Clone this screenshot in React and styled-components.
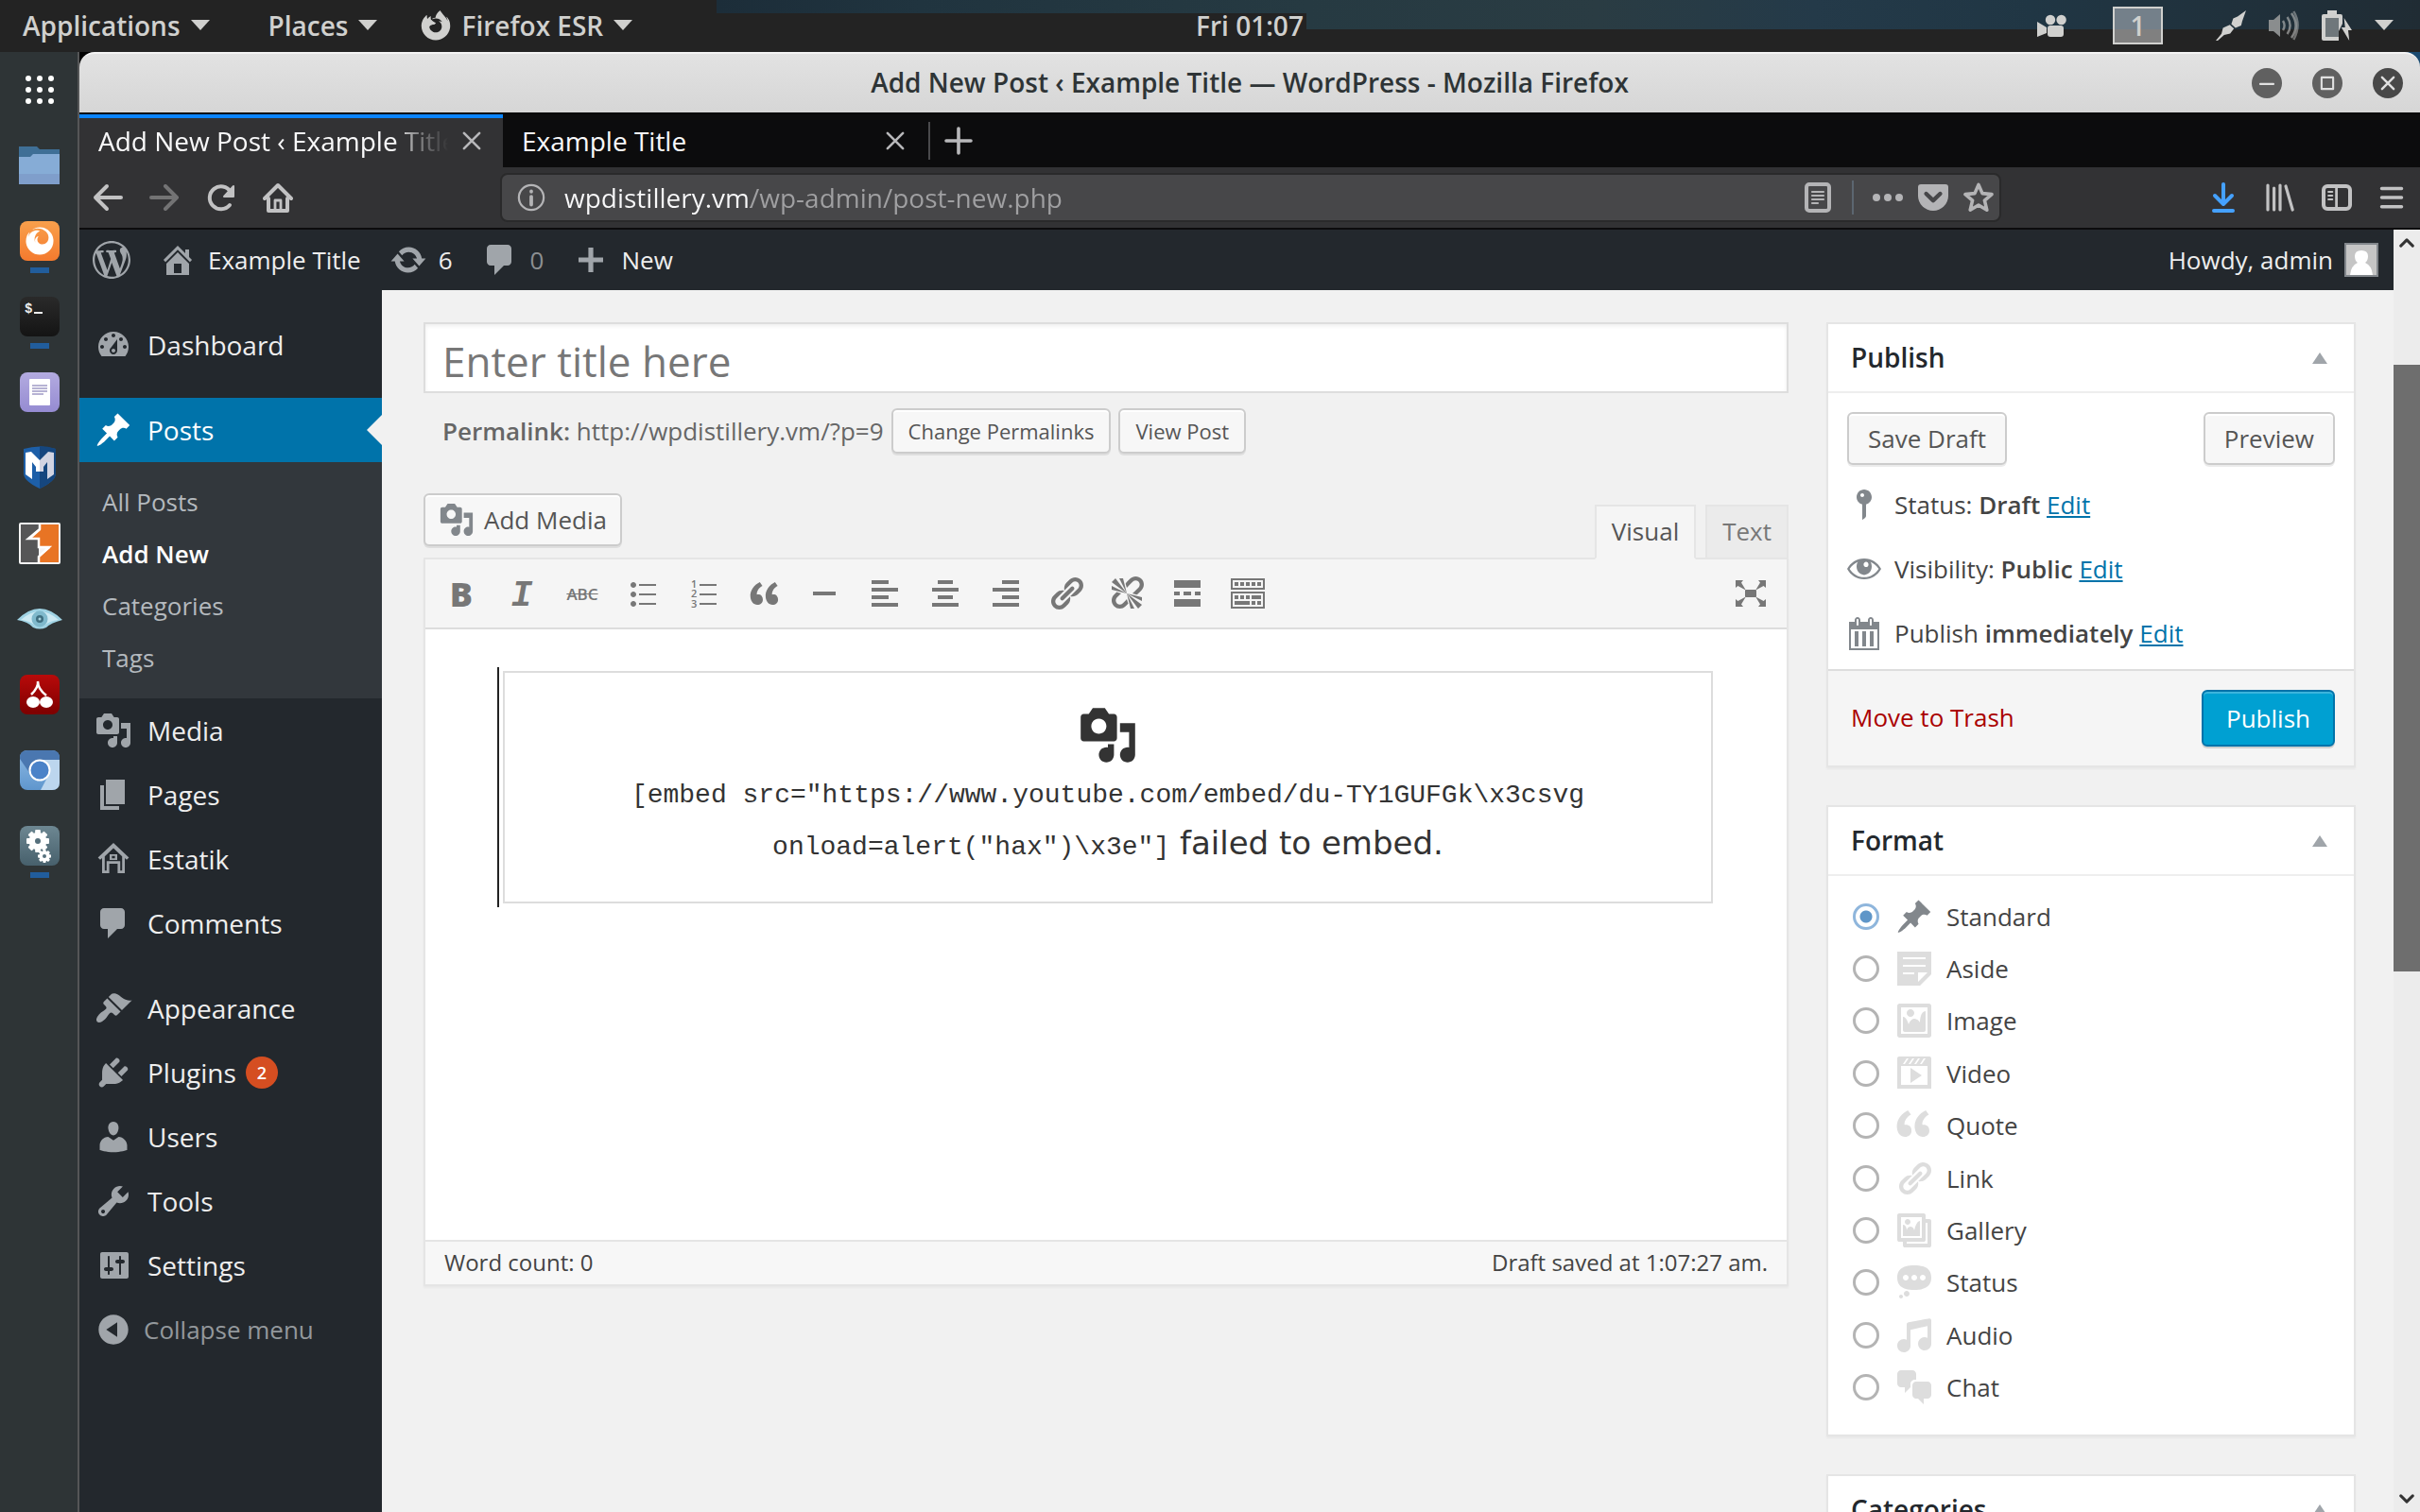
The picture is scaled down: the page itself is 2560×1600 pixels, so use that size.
import React, { useState } from "react";
import styled, { createGlobalStyle } from "styled-components";
import { FaFirefox, FaFirefoxBrowser } from "react-icons/fa";

const Global = createGlobalStyle`
  *, *::before, *::after { box-sizing: border-box; }
  body { margin: 0; background: #000; font-family: "Open Sans", "Noto Sans", sans-serif; }
  ul { list-style: none; margin: 0; padding: 0; }
  button, input { font-family: inherit; margin: 0; }
  button { cursor: pointer; }
  svg { display: block; flex: none; }
`;

/* ---------- icon shapes (20 x 20 grid) ---------- */
const shapes = {
  post: "M10.44 3.02l1.82-1.82 6.36 6.35-1.83 1.82c-1.05-.68-2.48-.57-3.41.36l-.75.75c-.92.93-1.04 2.35-.35 3.41l-1.83 1.82-2.41-2.41-2.8 2.79c-.42.42-3.38 2.71-3.8 2.29s1.86-3.39 2.28-3.81l2.79-2.79L4.1 9.36l1.83-1.82c1.05.69 2.48.57 3.4-.36l.75-.75c.93-.92 1.05-2.35.36-3.41z",
  dashboard: "M3.76 16h12.48c1.1-1.37 1.76-3.11 1.76-5 0-4.42-3.58-8-8-8s-8 3.58-8 8c0 1.89.66 3.63 1.76 5zM10 4c.55 0 1 .45 1 1s-.45 1-1 1-1-.45-1-1 .45-1 1-1zM6 6c.55 0 1 .45 1 1s-.45 1-1 1-1-.45-1-1 .45-1 1-1zm8 0c.55 0 1 .45 1 1s-.45 1-1 1-1-.45-1-1 .45-1 1-1zm-5.37 5.55L12 7v6c0 1.1-.9 2-2 2s-2-.9-2-2c0-.57.24-1.08.63-1.45zM4 10c.55 0 1 .45 1 1s-.45 1-1 1-1-.45-1-1 .45-1 1-1zm12 0c.55 0 1 .45 1 1s-.45 1-1 1-1-.45-1-1 .45-1 1-1zm-5 3c0-.55-.45-1-1-1s-1 .45-1 1 .45 1 1 1 1-.45 1-1z",
  media: "M13 11V4c0-.55-.45-1-1-1h-1.67L9 1H5L3.67 3H2c-.55 0-1 .45-1 1v7c0 .55.45 1 1 1h10c.55 0 1-.45 1-1zM7 4.5c1.38 0 2.5 1.12 2.5 2.5S8.38 9.5 7 9.5 4.5 8.38 4.5 7 5.62 4.5 7 4.5zM14 6h5v10.5c0 1.38-1.12 2.5-2.5 2.5S14 17.88 14 16.5s1.12-2.5 2.5-2.5c.17 0 .34.02.5.05V9h-3V6zm-4 8.05V13h2v3.5c0 1.38-1.12 2.5-2.5 2.5S7 17.88 7 16.5 8.12 14 9.5 14c.17 0 .34.02.5.05z",
  page: "M6 15V2h10v13H6zm-1 1h8v2H3V5h2v11z",
  estatik: "M10 1.5L1.8 9.2l1.2 1.2 1-.9V17.500h3.800v-5h4.400v5H16V9.500l1 .9 1.200-1.200zM10 4.300l4.600 4.300v7.500h-1v-5H6.400v5h-1V8.600zM8 7.500h4v3H8zM9.200 8.400v1.200h1.600V8.400z",
  comments: "M5 2h9c1.100 0 2 .9 2 2v7c0 1.100-.9 2-2 2h-2l-5 5v-5H5c-1.100 0-2-.9-2-2V4c0-1.100.9-2 2-2z",
  appearance: "M14.48 11.060L7.410 3.990l1.500-1.500c.5-.56 2.300-.47 3.510.32 1.210.8 1.430 1.280 2.910 2.100 1.180.64 2.450 1.260 4.450.85zm-.71.71L6.700 4.700 4.930 6.470c-.39.39-.39 1.020 0 1.410l1.060 1.060c.39.39.39 1.030 0 1.420-.6.6-1.430 1.110-2.210 1.690-.35.26-.7.53-1.010.84C1.430 14.230.4 16.080 1.400 17.070c.99 1 2.840-.03 4.180-1.360.31-.31.58-.66.85-1.020.57-.78 1.080-1.610 1.690-2.210.39-.39 1.020-.39 1.410 0l1.060 1.060c.39.39 1.020.39 1.410 0z",
  plugins: "M13.110 4.360L9.870 7.600 8 5.730l3.240-3.240c.35-.34 1.050-.2 1.560.32.52.51.66 1.210.31 1.550zm-8 1.770l.91-1.120 9.010 9.010-1.190.84c-.71.71-2.630 1.160-3.820 1.160H6.140L4.900 17.260c-.59.59-1.540.59-2.120 0-.59-.58-.59-1.530 0-2.120l1.240-1.240v-3.880c0-1.130.4-3.190 1.090-3.890zm7.260 3.970l3.240-3.240c.34-.35 1.040-.21 1.550.31.52.51.66 1.210.31 1.550l-3.240 3.250z",
  users: "M10 9.250c-2.270 0-2.730-3.440-2.730-3.440C7 4.020 7.820 2 9.970 2c2.160 0 2.980 2.020 2.710 3.810 0 0-.41 3.440-2.680 3.440zm0 2.570L12.720 10c2.390 0 4.520 2.330 4.520 4.530v2.490s-3.650 1.130-7.240 1.130c-3.650 0-7.240-1.130-7.240-1.130v-2.490c0-2.250 1.940-4.480 4.470-4.480z",
  tools: "M16.680 9.770c-1.340 1.340-3.300 1.670-4.950.99l-5.410 6.520c-.99.99-2.590.99-3.580 0s-.99-2.590 0-3.570l6.520-5.420c-.68-1.650-.35-3.610.99-4.950 1.280-1.280 3.120-1.620 4.720-1.060l-2.890 2.890 2.820 2.820 2.860-2.870c.53 1.580.18 3.390-1.080 4.650zM3.810 16.210c.4.39 1.040.39 1.430 0 .4-.4.4-1.040 0-1.430-.39-.4-1.030-.4-1.430 0-.39.39-.39 1.030 0 1.430z",
  settings: "M18 16V4c0-.55-.45-1-1-1H4c-.55 0-1 .45-1 1v12c0 .55.45 1 1 1h13c.55 0 1-.45 1-1zM8 11h1c.55 0 1 .45 1 1s-.45 1-1 1H8v1.500c0 .28-.22.5-.5.5s-.5-.22-.5-.5V13H6c-.55 0-1-.45-1-1s.45-1 1-1h1V5.500c0-.28.22-.5.5-.5s.5.22.5.5V11zm6-2h-1v5.500c0 .28.22.5.5.5s.5-.22.500-.5V9h1c.55 0 1-.45 1-1s-.45-1-1-1h-1V5.500c0-.28-.22-.5-.5-.5s-.5.22-.5.5V7h-1c-.55 0-1 .45-1 1s.45 1 1 1h1z",
  collapse: "M10 2.160c4.330 0 7.840 3.510 7.840 7.840s-3.510 7.840-7.840 7.840S2.160 14.330 2.160 10 5.710 2.160 10 2.160zm2 11.720V6.120L6.180 9.970z",
  home: "M16 8.500l1.530 1.530-1.060 1.060L10 4.600l-6.470 6.490-1.060-1.060L10 2.500l4 4v-2h2v4zm-6-2.460l6 5.990V18H4v-5.970zM12 17v-5H8v5h4z",
  update: "M10.200 3.280c3.530 0 6.430 2.610 6.920 6h2.080l-3.500 4-3.500-4h2.320c-.45-1.970-2.210-3.450-4.320-3.450-1.450 0-2.730.71-3.540 1.780L4.950 5.660C6.230 4.200 8.110 3.280 10.200 3.280zm-.4 13.440c-3.520 0-6.430-2.610-6.920-6H.8l3.500-4c1.170 1.330 2.330 2.670 3.500 4H5.480c.45 1.970 2.210 3.450 4.320 3.450 1.450 0 2.730-.71 3.540-1.780l1.710 1.950c-1.280 1.460-3.150 2.380-5.250 2.380z",
  plus: "M8.700 3.500h2.600v5.200h5.200v2.600h-5.200v5.200H8.700v-5.200H3.500V8.700h5.200z",
  wordpress: "M20 10c0-5.510-4.490-10-10-10C4.480 0 0 4.490 0 10c0 5.520 4.480 10 10 10 5.510 0 10-4.480 10-10zM7.780 15.370L4.370 6.220c.55-.02 1.170-.08 1.170-.08.5-.06.44-1.130-.06-1.110 0 0-1.450.11-2.370.11-.18 0-.37 0-.58-.01C4.120 2.690 6.870 1.110 10 1.110c2.330 0 4.450.87 6.050 2.340-.68-.11-1.650.39-1.650 1.580 0 .74.45 1.360.9 2.100.35.61.55 1.360.55 2.460 0 1.490-1.400 5-1.400 5l-3.030-8.370c.54-.02.82-.17.82-.17.5-.05.44-1.250-.06-1.220 0 0-1.440.12-2.380.12-.87 0-2.330-.12-2.330-.12-.5-.03-.56 1.200-.06 1.220l.92.08 1.260 3.410zM17.410 10c.24-.64.74-1.870.43-4.250.7 1.290 1.050 2.710 1.050 4.250 0 3.290-1.730 6.240-4.400 7.780.97-2.590 1.940-5.200 2.920-7.780zM6.100 18.090C3.120 16.650 1.110 13.530 1.110 10c0-1.300.23-2.480.72-3.590C3.250 10.300 4.670 14.200 6.100 18.090zm4.030-6.630l2.580 6.980c-.86.29-1.760.45-2.710.45-.79 0-1.570-.11-2.290-.33.81-2.380 1.620-4.740 2.420-7.100z",
  ul: "M5 7C4.170 7 3.500 6.330 3.500 5.500 3.500 4.680 4.170 4 5 4s1.500.68 1.500 1.500C6.500 6.330 5.820 7 5 7zM8 5h9v1H8V5zm-3 7c-.83 0-1.500-.67-1.500-1.500C3.500 9.680 4.170 9 5 9s1.500.68 1.500 1.500c0 .83-.68 1.500-1.500 1.500zM8 10h9v1H8v-1zm-3 7c-.83 0-1.500-.67-1.500-1.500 0-.82.67-1.500 1.500-1.500s1.500.68 1.500 1.500c0 .83-.68 1.500-1.500 1.500zM8 15h9v1H8v-1z",
  quoteTool: "M9.490 13.220c0-.74-.2-1.380-.61-1.900-.62-.78-1.830-.88-2.530-.72-.29-1.650 1.110-3.750 2.920-4.650L7.880 4c-2.730 1.300-5.420 4.280-4.960 8.050C3.210 14.430 4.590 16 6.540 16c.85 0 1.560-.25 2.120-.75s.83-1.180.83-2.030zm8.050 0c0-.74-.2-1.380-.61-1.900-.63-.78-1.830-.88-2.530-.72-.29-1.650 1.110-3.750 2.920-4.650L15.930 4c-2.730 1.300-5.410 4.280-4.950 8.050.29 2.380 1.660 3.950 3.610 3.950.85 0 1.560-.25 2.120-.75s.83-1.180.83-2.030z",
  rule: "M4 9h12v2H4z",
  left: "M3 3h9v2H3zM3 7h14v2H3zM3 11h9v2H3zM3 15h14v2H3z",
  center: "M6 3h8v2H6zM3 7h14v2H3zM6 11h8v2H6zM3 15h14v2H3z",
  right: "M8 3h9v2H8zM3 7h14v2H3zM8 11h9v2H8zM3 15h14v2H3z",
  link: "M17.740 2.760c1.680 1.690 1.680 4.410 0 6.100l-1.530 1.520c-1.120 1.120-2.700 1.470-4.140 1.090l2.620-2.610.76-.77.76-.76c.84-.84.84-2.200 0-3.040-.84-.85-2.200-.85-3.040 0l-.77.76-3.380 3.380c-.37-1.440-.02-3.020 1.100-4.140l1.520-1.530c1.690-1.680 4.420-1.680 6.100 0zM8.590 13.430l5.340-5.340c.42-.42.42-1.100 0-1.520-.44-.43-1.130-.39-1.530 0l-5.330 5.340c-.42.42-.42 1.100 0 1.520.44.43 1.130.39 1.520 0zm-.76 2.290l4.140-4.150c.38 1.440.03 3.020-1.090 4.140l-1.520 1.530c-1.690 1.680-4.410 1.680-6.100 0-1.680-1.680-1.680-4.420 0-6.100l1.530-1.520c1.120-1.120 2.700-1.470 4.140-1.100l-4.140 4.150c-.85.84-.85 2.200 0 3.050.84.84 2.200.84 3.040 0z",
  unlink: "M17.740 2.260c1.680 1.690 1.680 4.410 0 6.100l-1.530 1.520c-.32.33-.69.58-1.080.77L13 10l1.690-1.640.76-.77.76-.76c.84-.84.84-2.200 0-3.040-.84-.85-2.200-.85-3.040 0l-.77.76-.76.76L10 7l-.65-2.140c.19-.38.44-.75.77-1.070l1.520-1.530c1.690-1.680 4.420-1.680 6.100 0zM2 4l8 6-6-8zm4-2l4 8-2-8H6zM2 6l8 4-8-2V6zm7.360 7.690L10 13l.74 2.350-1.380 1.390c-1.690 1.680-4.410 1.680-6.100 0-1.680-1.680-1.680-4.420 0-6.100l1.390-1.380L7 10l-.69.64-1.520 1.530c-.85.84-.85 2.200 0 3.040.84.85 2.200.85 3.040 0zM18 16l-8-6 6 8zm-4 2l-4-8 2 8h2zm4-4l-8-4 8 2v2z",
  more: "M17 7V3H3v4h14zM6 11V9H3v2h3zm6 0V9H8v2h4zm5 0V9h-3v2h3zm0 6v-4H3v4h14z",
  keyboard: "M19 2v6H1V2h18zm-1 5V3H2v4h16zM5 4v2H3V4h2zm3 0v2H6V4h2zm3 0v2H9V4h2zm3 0v2h-2V4h2zm3 0v2h-2V4h2zm2 5v9H1V9h18zm-1 8v-7H2v7h16zM5 11v2H3v-2h2zm3 0v2H6v-2h2zm3 0v2H9v-2h2zm6 0v2h-5v-2h5zm-6 3v2H3v-2h8zm3 0v2h-2v-2h2zm3 0v2h-2v-2h2z",
  fullscreen: "M7 8h6v4H7zM2 3h4L5 4.200 7.400 8.200 3.200 6 2 7zM18 3h-4l1 1.200-2.400 4L16.800 6 18 7zM2 17h4l-1-1.200 2.400-4L3.200 14 2 13zM18 17h-4l1-1.200-2.400-4 4.200 2.200 1.200-1z",
  aside: "M1 1h18v12l-6 6H1V1zm3 3v1h12V4H4zm0 4v1h12V8H4zm6 5v-1H4v1h6zm2 4l5-5h-5v5z",
  image: "M2.250 1h15.500c.69 0 1.250.56 1.250 1.250v15.500c0 .69-.56 1.250-1.250 1.250H2.250C1.560 19 1 18.440 1 17.750V2.250C1 1.560 1.560 1 2.250 1zM17 17V3H3v14h14zM10 6c0-1.100-.9-2-2-2s-2 .9-2 2 .9 2 2 2 2-.9 2-2zm3 5s0-6 3-6v10c0 .55-.45 1-1 1H5c-.55 0-1-.45-1-1V8c2 0 3 4 3 4s1-3 3-3 3 2 3 2z",
  video: "M2 1h16c.55 0 1 .45 1 1v16l-18-.02V2c0-.55.45-1 1-1zm4 1L4 5h1l2-3H6zm4 0H9L7 5h1zm3 0h-1l-2 3h1zm3 0h-1l-2 3h1zm1 14V6H3v10h14zM8 7l6 4-6 4V7z",
  quote: "M8.540 12.740c0-.87-.24-1.610-.72-2.220-.73-.92-2.140-1.030-2.960-.85-.34-1.930 1.300-4.390 3.420-5.450L6.650 1.940C3.450 3.460.31 6.960.85 11.370 1.190 14.160 2.800 16 5.080 16c1 0 1.830-.29 2.480-.88.66-.59.98-1.380.98-2.380zm9.430 0c0-.87-.24-1.610-.72-2.220-.73-.92-2.140-1.030-2.960-.85-.34-1.930 1.300-4.390 3.420-5.450l-1.630-2.280c-3.200 1.520-6.340 5.020-5.800 9.430.34 2.790 1.950 4.630 4.230 4.630 1 0 1.830-.29 2.480-.88.66-.59.98-1.380.98-2.380z",
  gallery: "M16 4h1.960c.57 0 1.040.47 1.040 1.040v12.920c0 .57-.47 1.040-1.040 1.040H5.040C4.470 19 4 18.530 4 17.960V16H2.040C1.470 16 1 15.530 1 14.960V2.040C1 1.470 1.470 1 2.040 1h12.920c.57 0 1.040.47 1.040 1.040V4zM3 14h11V3H3v11zm5-8.500C8 4.670 7.330 4 6.500 4S5 4.670 5 5.500 5.670 7 6.500 7 8 6.330 8 5.500zm2 4.500s1-5 3-5v8H4V7c2 0 2 3 2 3s.33-2 2-2 2 2 2 2zm7 7V6h-1v8.960c0 .57-.47 1.040-1.040 1.040H6v1h11z",
  status: "M10 1c7 0 9 2.910 9 6.500S17 14 10 14s-9-2.910-9-6.500S3 1 10 1zM5.500 9C6.330 9 7 8.330 7 7.500S6.330 6 5.500 6 4 6.670 4 7.500 4.670 9 5.500 9zM10 9c.83 0 1.500-.67 1.500-1.500S10.830 6 10 6s-1.500.67-1.500 1.500S9.170 9 10 9zm4.500 0c.83 0 1.500-.67 1.500-1.500S15.330 6 14.500 6 13 6.670 13 7.500 13.670 9 14.500 9zM6 14.500c.83 0 1.500.67 1.500 1.500s-.67 1.500-1.500 1.500-1.500-.67-1.500-1.500.67-1.500 1.500-1.500zm-3 2c.55 0 1 .45 1 1s-.45 1-1 1-1-.45-1-1 .45-1 1-1z",
  audio: "M6.990 3.080l11.020-2c.55-.08.99.45.99 1V14.500c0 1.940-1.570 3.500-3.500 3.500S12 16.440 12 14.500c0-1.930 1.570-3.500 3.500-3.500.54 0 1.040.14 1.500.35V5.080l-9 2V16c-.24 1.700-1.740 3-3.500 3C2.570 19 1 17.440 1 15.500 1 13.570 2.570 12 4.500 12c.54 0 1.040.14 1.500.35V4.080c0-.55.44-.91.99-1z",
  chat: "M11 6h-.82C9.070 6 8 7.200 8 8.160V10l-3 3v-3H3c-1.100 0-2-.9-2-2V3c0-1.100.9-2 2-2h6c1.100 0 2 .9 2 2v3zm0 1h6c1.100 0 2 .9 2 2v5c0 1.100-.9 2-2 2h-2v3l-3-3h-1c-1.100 0-2-.9-2-2V9c0-1.100.9-2 2-2z",
  pin: "M14 6c0 1.860-1.280 3.410-3 3.860V16c0 1-2 2-2 2V9.860c-1.720-.45-3-2-3-3.860 0-2.210 1.790-4 4-4s4 1.790 4 4zM8 5c0 .55.45 1 1 1s1-.45 1-1-.45-1-1-1-1 .45-1 1z",
  eye: "M10 4.500c-4 0-7.300 2.300-9 5.500 1.700 3.200 5 5.500 9 5.500s7.300-2.300 9-5.500c-1.700-3.200-5-5.500-9-5.500zM10 14.400c-3.300 0-6.100-1.800-7.700-4.400C3.300 8.300 4.900 7 6.700 6.200 6.200 6.900 6 7.800 6 8.800c0 2.400 1.800 4.400 4 4.400s4-2 4-4.400c0-1-.2-1.900-.7-2.600 1.800.8 3.400 2.100 4.400 3.800-1.600 2.600-4.400 4.400-7.700 4.400zM11 6.300c.7 0 1.300.6 1.300 1.400S11.700 9 11 9s-1.300-.6-1.300-1.300.6-1.400 1.300-1.400z",
  calendar: "M15 4h3v15H2V4h3V3c0-.41.15-.76.44-1.060.29-.29.65-.44 1.060-.44s.77.15 1.060.44c.29.3.44.65.44 1.060v1h4V3c0-.41.15-.76.44-1.060.29-.29.65-.44 1.060-.44s.77.15 1.060.44c.29.3.44.65.44 1.060v1zM6 3v2.500c0 .14.05.26.15.36.09.09.21.14.35.14s.26-.05.35-.14c.1-.1.15-.22.15-.36V3c0-.14-.05-.26-.15-.35-.09-.1-.21-.15-.35-.15s-.26.05-.35.15c-.1.09-.15.21-.15.35zm7 0v2.500c0 .14.05.26.14.36.1.09.22.14.36.14s.26-.05.36-.14c.09-.1.14-.22.14-.36V3c0-.14-.05-.26-.14-.35-.1-.1-.22-.15-.36-.15s-.26.05-.36.15c-.09.09-.14.21-.14.35zm4 15V8H3v10h14zM7 9v8H5V9h2zm4 0v8H9V9h2zm4 0v8h-2V9h2z",
};

const Glyph = ({ name, size = 40 }) => (
  <svg width={size} height={size} viewBox="0 0 20 20" fill="currentColor" aria-hidden="true">
    <path d={shapes[name]} fillRule="evenodd" />
  </svg>
);

const Line = ({ children, size = 32, width = 2 }) => (
  <svg width={size} height={size} viewBox="0 0 16 16" fill="none" stroke="currentColor" strokeWidth={width} strokeLinecap="round" strokeLinejoin="round" aria-hidden="true">
    {children}
  </svg>
);

/* ---------- desktop ---------- */
const Desktop = styled.div`
  display: flex;
  flex-direction: column;
  height: 100vh;
  overflow: hidden;
`;

const TopBar = styled.header`
  flex: none;
  display: grid;
  grid-template-columns: 84px 1fr auto 1fr;
  align-items: center;
  height: 55px;
  padding-bottom: 2px;
  color: #d0d0ce;
  font-size: 28px;
  font-weight: 600;
  line-height: 40px;
  background-color: #232323;
  background-image:
    linear-gradient(90deg, transparent 29.6%, #1c2d39 29.6%, #20343f 38%, #263a42 54%, transparent 54%),
    linear-gradient(90deg, transparent 54%, #263a42 54%, #2a3c43 66%, #243a49 75%, #203644 84%, #202c34 100%);
  background-size: 100% 14px, 100% 31px;
  background-repeat: no-repeat;
`;

const TopMenus = styled.nav`
  grid-column: 1 / 3;
  display: flex;
  align-items: center;
  padding-left: 24px;
`;

const BareButton = styled.button`
  display: inline-flex;
  align-items: center;
  justify-content: center;
  padding: 0;
  border: 0;
  background: none;
  color: inherit;
  font-size: inherit;
  font-weight: inherit;
  line-height: inherit;
`;

const TopMenu = styled(BareButton)`
  gap: 11px;
  margin-right: ${(p) => p.$gap || 0}px;
`;

const Caret = styled.span`
  width: 0;
  height: 0;
  border: 10px solid transparent;
  border-top: 11px solid currentColor;
  border-bottom: 0;
`;

const Tray = styled.div`
  display: flex;
  align-items: center;
  justify-content: flex-end;
  gap: 24px;
  padding-right: 28px;
`;

const TrayGroup = styled(BareButton)`
  gap: ${(p) => p.$gap || 0}px;
`;

const Workspace = styled(BareButton)`
  width: 53px;
  height: 40px;
  margin: 0 32px 0 24px;
  border: 2px solid #d0d0ce;
  background: linear-gradient(#74808a 60%, #808080 60%);
`;

const Main = styled.div`
  flex: 1;
  display: flex;
  min-height: 0;
`;

const Dock = styled.nav`
  flex: none;
  width: 84px;
  border-right: 2px solid #555657;
  background: #2e3436;
`;

const DockItem = styled.button`
  position: relative;
  display: flex;
  align-items: center;
  justify-content: center;
  width: 100%;
  height: 80px;
  padding: 0 0 0 2px;
  border: 0;
  background: none;
  &::after {
    content: "";
    display: ${(p) => (p.$running ? "block" : "none")};
    position: absolute;
    left: 32px;
    bottom: 6px;
    width: 20px;
    height: 6px;
    background: #215d9c;
  }
`;

const Window = styled.div`
  flex: 1;
  min-width: 0;
  display: flex;
  flex-direction: column;
  background: linear-gradient(90deg, #000 50%, #1a4a70 50%);
`;

const TitleBar = styled.div`
  flex: none;
  display: grid;
  grid-template-columns: 1fr auto 1fr;
  align-items: center;
  height: 64px;
  border-top: 2px solid #f4f4f4;
  border-radius: 16px 16px 0 0;
  background: linear-gradient(#e2e2e2, #d6d6d6);
`;

const WindowTitle = styled.h1`
  grid-column: 2;
  margin: 0;
  padding-bottom: 2px;
  color: #2e3436;
  font-size: 28px;
  font-weight: 600;
  line-height: 40px;
`;

const WindowButtons = styled.div`
  display: flex;
  justify-content: flex-end;
  gap: 32px;
  padding-right: 18px;
`;

const RoundButton = styled(BareButton)`
  width: 32px;
  height: 32px;
  border-radius: 50%;
  background: ${(p) => (p.$strong ? "#484848" : "#606060")};
  color: #e0e0e0;
`;

const TabStrip = styled.div`
  flex: none;
  display: flex;
  height: 58px;
  border: solid #060606;
  border-width: 2px 0 0;
  background: #0c0c0d;
`;

const Tab = styled.div`
  display: flex;
  align-items: center;
  justify-content: space-between;
  width: 448px;
  padding: 0 20px 4px;
  border-top: 4px solid ${(p) => (p.$active ? "#0a84ff" : "transparent")};
  background: ${(p) => (p.$active ? "#323234" : "transparent")};
  color: #f9f9fa;
  font-size: 28px;
  line-height: 40px;
`;

const TabTitle = styled.span`
  flex: 1;
  overflow: hidden;
  white-space: nowrap;
  ${(p) => p.$fade && "mask-image: linear-gradient(90deg, #000 82%, rgba(0,0,0,.45) 88%, transparent 97%);"}
`;

const TabClose = styled(BareButton)`
  width: 26px;
  color: #b8b8ba;
`;

const NewTab = styled(BareButton)`
  align-self: center;
  width: 62px;
  height: 40px;
  margin-left: 2px;
  border-left: 2px solid #4a4a4c;
  color: #b8b8ba;
`;

const NavBar = styled.div`
  flex: none;
  display: flex;
  align-items: center;
  justify-content: space-between;
  height: 66px;
  padding: 0 16px 0 14px;
  border-bottom: 2px solid #0c0c0d;
  background: #323234;
  color: #c2c2c3;
`;

const NavGroup = styled.div`
  display: flex;
  align-items: center;
  gap: ${(p) => p.$gap}px;
`;

const NavButton = styled(BareButton)`
  color: ${(p) => p.$color || "inherit"};
  opacity: ${(p) => (p.disabled ? 0.45 : 1)};
`;

const UrlBar = styled.form`
  display: flex;
  align-items: center;
  flex: 0 1 1588px;
  height: 52px;
  padding: 0 6px 0 16px;
  border: 2px solid #2a2a2b;
  border-radius: 8px;
  background: #474749;
  color: #b4b4b6;
`;

const UrlInput = styled.input`
  flex: 1;
  min-width: 0;
  padding: 0;
  margin-left: 20px;
  border: 0;
  outline: 0;
  color: #f9f9fa;
  font-size: 28px;
  line-height: 40px;
  background: linear-gradient(90deg, #f9f9fa 197px, #a0a0a2 197px);
  background-clip: text;
  -webkit-text-fill-color: transparent;
`;

const UrlActions = styled.div`
  display: flex;
  align-items: center;
  gap: 16px;
  height: 36px;
  margin-left: 20px;
  padding-left: 20px;
  border-left: 2px solid #5c6670;
`;

/* ---------- web page ---------- */
const Viewport = styled.div`
  flex: 1;
  display: flex;
  min-height: 0;
`;

const Page = styled.div`
  flex: 1;
  min-width: 0;
  display: flex;
  flex-direction: column;
  background: #f1f1f1;
  color: #444;
  font-size: 26px;
`;

const AdminBar = styled.div`
  flex: none;
  display: flex;
  align-items: center;
  height: 64px;
  padding: 0 16px 0 14px;
  background: #23282d;
  color: #eee;
  font-size: 26px;
  line-height: 64px;
`;

const BarLink = styled.a`
  display: flex;
  align-items: center;
  gap: 12px;
  margin-right: ${(p) => (p.$last ? 0 : 30)}px;
  margin-left: ${(p) => (p.$push ? "auto" : 0)};
  color: ${(p) => (p.$dim ? "#8c8f92" : "#eee")};
  text-decoration: none;
  svg { color: #a0a5aa; }
`;

const Avatar = styled.svg`
  width: 36px;
  height: 36px;
  border: 2px solid #82878c;
  background: #c5c5c5;
`;

const PageBody = styled.div`
  flex: 1;
  display: flex;
  min-height: 0;
`;

const SideMenu = styled.nav`
  flex: none;
  width: 320px;
  padding-top: 24px;
  background: #23282d;
`;

const MenuItem = styled.li`
  margin-top: ${(p) => (p.$spaced ? 22 : 0)}px;
`;

const MenuLink = styled.a`
  position: relative;
  display: flex;
  align-items: center;
  height: 68px;
  padding-left: 16px;
  gap: 16px;
  background: ${(p) => (p.$current ? "#0073aa" : "transparent")};
  color: ${(p) => (p.$current ? "#fff" : "#eee")};
  font-size: 28px;
  line-height: 36px;
  text-decoration: none;
  svg { color: ${(p) => (p.$current ? "#fff" : "#a0a5aa")}; }
  &::after {
    content: "";
    display: ${(p) => (p.$current ? "block" : "none")};
    position: absolute;
    right: 0;
    top: 18px;
    border: 16px solid transparent;
    border-right-color: #f1f1f1;
    border-left: 0;
  }
`;

const SubMenu = styled.ul`
  padding: 15px 0;
  background: #32373c;
`;

const SubLink = styled.a`
  display: block;
  padding-left: 24px;
  color: ${(p) => (p.$current ? "#fff" : "#b4b9be")};
  font-size: 26px;
  font-weight: ${(p) => (p.$current ? 600 : 400)};
  line-height: 55px;
  text-decoration: none;
`;

const Badge = styled.span`
  width: 34px;
  margin-left: -6px;
  border-radius: 17px;
  background: #d54e21;
  color: #fff;
  font-size: 18px;
  font-weight: 600;
  line-height: 34px;
  text-align: center;
`;

const CollapseButton = styled(BareButton)`
  height: 68px;
  padding-left: 16px;
  gap: 12px;
  color: #a0a5aa;
  font-size: 26px;
  span { color: #93989c; }
`;

const Content = styled.main`
  flex: 1;
  min-width: 0;
  display: grid;
  grid-template-columns: 1fr 560px;
  align-items: start;
  gap: 40px;
  padding: 34px 40px 0 44px;
`;

const Column = styled.div`
  min-width: 0;
`;

const SidePanels = styled(Column)`
  display: flex;
  flex-direction: column;
  gap: 40px;
`;

const TitleInput = styled.input`
  display: block;
  width: 100%;
  height: 75px;
  padding: 6px 18px 0;
  border: 2px solid #ddd;
  outline: 0;
  background: #fff;
  box-shadow: inset 0 2px 4px rgba(0, 0, 0, 0.07);
  color: #32373c;
  font-size: 44px;
  &::placeholder { color: #777; opacity: 1; }
`;

const PermalinkRow = styled.div`
  display: flex;
  align-items: center;
  gap: 8px;
  margin: 16px 0 42px;
  padding-left: 20px;
  color: #666;
  font-size: 26px;
  line-height: 48px;
  strong { font-weight: 600; }
`;

const Button = styled.button`
  display: inline-flex;
  align-items: center;
  justify-content: center;
  gap: 10px;
  height: ${(p) => (p.$small ? 48 : 56)}px;
  padding: 0 ${(p) => (p.$small ? 16 : 20)}px;
  border: 2px solid #ccc;
  border-radius: 6px;
  background: #f7f7f7;
  box-shadow: inset 0 2px 0 #fff, 0 2px 0 rgba(0, 0, 0, 0.08);
  color: #555;
  font-size: ${(p) => (p.$small ? 22 : 26)}px;
`;

const MediaButton = styled(Button)`
  margin-bottom: 12px;
  padding: 0 14px;
  svg { color: #82878c; }
`;

const PrimaryButton = styled(Button)`
  height: 60px;
  padding: 0 24px;
  border-color: #0073aa;
  background: #00a0d2;
  box-shadow: inset 0 2px 0 rgba(120, 200, 230, 0.5), 0 2px 0 rgba(0, 0, 0, 0.15);
  color: #fff;
`;

const EditorTop = styled.div`
  display: flex;
  align-items: flex-end;
  justify-content: space-between;
`;

const EditorTabs = styled.div`
  display: flex;
  gap: 10px;
  margin-bottom: -2px;
`;

const EditorTab = styled.button`
  position: relative;
  height: 58px;
  padding: 0 16px 2px;
  border: 2px solid #e5e5e5;
  border-bottom-color: ${(p) => (p.$active ? "#f5f5f5" : "#e5e5e5")};
  background: ${(p) => (p.$active ? "#f5f5f5" : "#ebebeb")};
  color: ${(p) => (p.$active ? "#555" : "#777")};
  font-size: 26px;
`;

const Editor = styled.section`
  border: 2px solid #e5e5e5;
  background: #fff;
  box-shadow: 0 2px 2px rgba(0, 0, 0, 0.04);
`;

const Toolbar = styled.div`
  display: flex;
  align-items: center;
  height: 74px;
  padding: 0 6px;
  border-bottom: 2px solid #ddd;
  background: #f5f5f5;
`;

const ToolButton = styled(BareButton)`
  width: 64px;
  height: 60px;
  margin-left: ${(p) => (p.$push ? "auto" : 0)};
  color: #777;
`;

const BoldMark = styled.b`
  font-size: 36px;
  font-weight: 800;
`;

const ItalicMark = styled.i`
  padding-top: 4px;
  font-family: "Liberation Mono", monospace;
  font-size: 38px;
  font-weight: 700;
`;

const StrikeMark = styled.s`
  font-size: 17px;
  font-weight: 600;
`;

const Canvas = styled.div`
  min-height: 646px;
  padding: 40px 78px 40px 76px;
`;

const Selection = styled.div`
  padding: 4px 0 4px 4px;
  border-left: 2px solid #222;
`;

const EmbedBox = styled.div`
  padding: 34px 120px;
  border: 2px solid #ddd;
  color: #333;
  font-family: "DejaVu Sans", sans-serif;
  font-size: 34px;
  line-height: 55px;
  text-align: center;
  svg { margin: 0 auto; }
  p { margin: 0; }
  code { font-family: "Liberation Mono", monospace; font-size: 28px; line-height: 28px; }
`;

const StatusBar = styled.footer`
  display: flex;
  justify-content: space-between;
  padding: 0 20px 1px;
  border-top: 2px solid #e5e5e5;
  background: #f7f7f7;
  font-size: 24px;
  line-height: 44px;
`;

const Panel = styled.section`
  border: 2px solid #e5e5e5;
  background: #fff;
  box-shadow: 0 2px 2px rgba(0, 0, 0, 0.04);
`;

const PanelHead = styled.header`
  display: flex;
  align-items: center;
  justify-content: space-between;
  height: 73px;
  padding: 0 28px 0 24px;
  border-bottom: 2px solid #eee;
  h2 {
    margin: 0;
    padding-bottom: 2px;
    color: #23282d;
    font-size: 28px;
    font-weight: 600;
    line-height: 40px;
  }
`;

const Toggle = styled(BareButton)`
  &::before {
    content: "";
    border: 8px solid transparent;
    border-bottom: 12px solid #a0a5aa;
    border-top: 0;
  }
`;

const Split = styled.div`
  display: flex;
  align-items: center;
  justify-content: space-between;
  padding: 20px 20px 8px;
`;

const Facts = styled.ul`
  padding: 0 20px 4px 18px;
`;

const Fact = styled.li`
  display: flex;
  align-items: center;
  gap: 12px;
  height: 68px;
  svg { color: #82878c; }
  b { font-weight: 600; }
  a { color: #0073aa; }
`;

const Actions = styled(Split)`
  padding: 20px 20px 20px 24px;
  border-top: 2px solid #ddd;
  background: #f5f5f5;
  a { padding-bottom: 2px; color: #a00; text-decoration: none; }
`;

const FormatList = styled.div`
  display: grid;
  grid-auto-rows: 1fr;
  min-height: 591px;
  padding: 15px 20px 22px 26px;
`;

const FormatRow = styled.label`
  display: flex;
  align-items: center;
  color: #444;
  svg { margin: 0 14px 0 17px; color: ${(p) => (p.$on ? "#82878c" : "#ddd")}; }
`;

const Radio = styled.input`
  appearance: none;
  width: 28px;
  height: 28px;
  border: 3px solid ${(p) => (p.checked ? "#8fb6dc" : "#b4b4b4")};
  border-radius: 50%;
  background: ${(p) => (p.checked ? "radial-gradient(circle, #5f96c8 0 6px, #fff 7px)" : "#fff")};
`;

const ScrollBar = styled.div`
  flex: none;
  display: flex;
  flex-direction: column;
  width: 28px;
  background: #ececec;
  color: #333;
`;

const ScrollButton = styled(BareButton)`
  height: 28px;
`;

const Spacer = styled.div`
  flex: ${(p) => p.$grow} 0 0;
`;

const Thumb = styled(Spacer)`
  background: #6e6e6e;
`;

/* ---------- drawings ---------- */
const Tile = ({ id, from, to, children }) => (
  <svg width="44" height="44" viewBox="0 0 44 44" aria-hidden="true">
    <defs>
      <linearGradient id={id} x1="0" y1="0" x2="0" y2="1">
        <stop offset="0" stopColor={from} />
        <stop offset="1" stopColor={to} />
      </linearGradient>
    </defs>
    <rect x="1" y="1" width="42" height="42" rx="8" fill={`url(#${id})`} />
    {children}
  </svg>
);

const gear = (cx, cy, r, teeth, hole) => (
  <g>
    {Array.from({ length: teeth }, (_, i) => (
      <rect key={i} x={cx - r * 0.24} y={cy - r} width={r * 0.48} height={r} rx="1" fill="#fff" transform={`rotate(${(i * 360) / teeth} ${cx} ${cy})`} />
    ))}
    <circle cx={cx} cy={cy} r={r * 0.78} fill="#fff" />
    <circle cx={cx} cy={cy} r={hole} fill="#56707c" />
  </g>
);

const FoldersIcon = () => (
  <svg width="46" height="42" viewBox="0 0 46 42" aria-hidden="true">
    <path d="M1 41V1h19l3 3h21v37z" fill="#3f6f96" />
    <path d="M1 41V12h12l3-3h28v32z" fill="#86acd6" />
    <path d="M1 41V30h43v11z" fill="#7c98c6" opacity=".7" />
  </svg>
);

const MetasploitIcon = () => (
  <svg width="36" height="46" viewBox="0 0 36 46" aria-hidden="true">
    <path d="M1 3q17-5 34 0v26q0 8-17 16Q1 37 1 29z" fill="#1d5fa8" />
    <path d="M18 45Q35 37 35 29V3q-8-3-17-3z" fill="#15467e" />
    <path d="M3 7l6-1 9 9v12h-4v-5l-4-5v18l-7-5z" fill="#fff" />
    <path d="M33 7l-6-1-9 9v12h4v-5l4-5v18l7-5z" fill="#d2d4e2" />
  </svg>
);

const BurpIcon = () => (
  <svg width="46" height="46" viewBox="0 0 46 46" aria-hidden="true">
    <rect x="1" y="1" width="44" height="44" rx="2" fill="#f4f4f4" />
    <path d="M3 3h19v5L10 18h12v25H3z" fill="#565657" />
    <path d="M24 3h19v40H23v-6l11-9H22V18H14L24 9z" fill="#e87424" />
    <path d="M23 3v5L11 18h11v9h11L22 37v7" fill="none" stroke="#fff" strokeWidth="2.500" />
  </svg>
);

const EyeIcon = () => (
  <svg width="48" height="24" viewBox="0 0 48 24" aria-hidden="true">
    <path d="M0 13Q12 1 24 1t24 12Q36 16 31 21q-7 3-14 0Q12 15 0 13z" fill="#9fd3e4" />
    <path d="M4 13Q14 4 24 4t20 9q-10 1-15 6-5 2-10 0-5-5-15-6z" fill="#cdeaf3" />
    <circle cx="24" cy="12" r="8.500" fill="#7fb9cc" />
    <circle cx="24" cy="12" r="4" fill="#3f6f80" />
    <circle cx="24" cy="12" r="1.500" fill="#a9d4e0" />
  </svg>
);

const CherryIcon = () => (
  <Tile id="cherry" from="#b80a0a" to="#7d0000">
    <path d="M20 8q1 6-7 14M20 8q0 8 9 15" fill="none" stroke="#fff" strokeWidth="2.500" />
    <ellipse cx="15" cy="30" rx="7" ry="6" fill="#fff" />
    <ellipse cx="29" cy="30" rx="7" ry="6" fill="#fff" />
  </Tile>
);

const ChromiumIcon = () => (
  <Tile id="chromium" from="#8db9e4" to="#5f96cd">
    <path d="M1 9q0-8 8-8h26q8 0 8 8v2H22L12 26 1 10z" fill="#4a77b0" />
    <path d="M22 11h21v24q0 8-8 8H23l9-17z" fill="#bcd6ee" />
    <circle cx="22" cy="22" r="10.500" fill="#4a82c8" stroke="#fff" strokeWidth="2" />
  </Tile>
);

const NotesIcon = () => (
  <Tile id="notes" from="#b3abe0" to="#958bd2">
    <rect x="11" y="8" width="22" height="28" rx="1" fill="#fff" />
    <path d="M14 15h16M14 18h16M14 21h16M14 24h12" stroke="#6f66a8" strokeWidth="1" />
  </Tile>
);

const TerminalIcon = () => (
  <Tile id="term" from="#2a2a2a" to="#141414">
    <text x="6" y="18" fill="#eee" fontFamily="Liberation Mono, monospace" fontSize="14" fontWeight="700">$</text>
    <path d="M16 18h9" stroke="#eee" strokeWidth="2" />
  </Tile>
);

const AppsIcon = () => (
  <svg width="30" height="30" viewBox="0 0 30 30" fill="#fff" aria-hidden="true">
    {[3, 15, 27].map((x) => [3, 15, 27].map((y) => <circle key={`${x}-${y}`} cx={x} cy={y} r="3" />))}
  </svg>
);

const FirefoxTile = () => (
  <Tile id="fox" from="#f9a04c" to="#f47a2e">
    <g transform="translate(7 7)" color="#fff"><FaFirefox size={30} /></g>
  </Tile>
);

const SettingsTile = () => (
  <Tile id="gears" from="#6d8792" to="#47606c">
    {gear(20, 17, 12, 8, 3)}
    {gear(27, 33, 7, 8, 2)}
  </Tile>
);

const dock = [
  ["Show applications", AppsIcon, false],
  ["Files", FoldersIcon, false],
  ["Firefox", FirefoxTile, true],
  ["Terminal", TerminalIcon, true],
  ["Notes", NotesIcon, false],
  ["Metasploit", MetasploitIcon, false],
  ["Burp Suite", BurpIcon, false],
  ["Zenmap", EyeIcon, false],
  ["CherryTree", CherryIcon, false],
  ["Chromium", ChromiumIcon, false],
  ["Tweaks", SettingsTile, true],
];

const menu = [
  { label: "Dashboard", icon: "dashboard" },
  { label: "Posts", icon: "post", current: true, spaced: true, children: ["All Posts", "Add New", "Categories", "Tags"] },
  { label: "Media", icon: "media" },
  { label: "Pages", icon: "page" },
  { label: "Estatik", icon: "estatik" },
  { label: "Comments", icon: "comments" },
  { label: "Appearance", icon: "appearance", spaced: true },
  { label: "Plugins", icon: "plugins", count: 2 },
  { label: "Users", icon: "users" },
  { label: "Tools", icon: "tools" },
  { label: "Settings", icon: "settings" },
];

const formats = [
  ["Standard", "post"],
  ["Aside", "aside"],
  ["Image", "image"],
  ["Video", "video"],
  ["Quote", "quote"],
  ["Link", "link"],
  ["Gallery", "gallery"],
  ["Status", "status"],
  ["Audio", "audio"],
  ["Chat", "chat"],
];

const NumberedList = () => (
  <svg width="40" height="40" viewBox="0 0 40 40" fill="currentColor" aria-hidden="true">
    <path d="M16 10h18v2H16zM16 20h18v2H16zM16 30h18v2H16z" />
    <g fontFamily="Open Sans, sans-serif" fontSize="11" fontWeight="600">
      <text x="7" y="14">1</text>
      <text x="7" y="24">2</text>
      <text x="7" y="35">3</text>
    </g>
  </svg>
);

const tools = [
  ["Bold", <BoldMark>B</BoldMark>],
  ["Italic", <ItalicMark>I</ItalicMark>],
  ["Strikethrough", <StrikeMark>ABC</StrikeMark>],
  ["Bulleted list", <Glyph name="ul" />],
  ["Numbered list", <NumberedList />],
  ["Blockquote", <Glyph name="quoteTool" />],
  ["Horizontal line", <Glyph name="rule" />],
  ["Align left", <Glyph name="left" />],
  ["Align center", <Glyph name="center" />],
  ["Align right", <Glyph name="right" />],
  ["Insert link", <Glyph name="link" />],
  ["Remove link", <Glyph name="unlink" />],
  ["Read more", <Glyph name="more" />],
  ["Toolbar toggle", <Glyph name="keyboard" />],
];

const facts = [
  ["pin", "Status:", "Draft"],
  ["eye", "Visibility:", "Public"],
  ["calendar", "Publish", "immediately"],
];

function SystemBar() {
  return (
    <TopBar>
      <TopMenus>
        <TopMenu $gap={62}>Applications<Caret /></TopMenu>
        <TopMenu $gap={46}>Places<Caret /></TopMenu>
        <TopMenu><FaFirefoxBrowser size={32} />Firefox ESR<Caret /></TopMenu>
      </TopMenus>
      <BareButton>Fri 01:07</BareButton>
      <Tray>
        <TrayGroup aria-label="Screen recorder">
          <svg width="32" height="32" viewBox="0 0 16 16" fill="currentColor">
            <path d="M0 6l5 3v3l-5 2z" />
            <circle cx="7" cy="5" r="2.600" />
            <circle cx="12.800" cy="5" r="2.600" />
            <rect x="5.500" y="8" width="8.500" height="6" rx="1.500" />
          </svg>
        </TrayGroup>
        <Workspace>1</Workspace>
        <TrayGroup $gap={24} aria-label="System menu">
          <svg width="32" height="32" viewBox="0 0 16 16" fill="currentColor">
            <path d="M16 0l-4.500 3.200-2.300 1-1 3 2.200 2 3-1.200.6-2.400zM7.400 7.600l-3.600 1.600-.8 3.200L0 16l1 0 3.400-3 3.200-.8 2-2.600z" />
          </svg>
          <svg width="32" height="32" viewBox="0 0 16 16" fill="none" stroke="currentColor" strokeWidth="1.200">
            <path d="M0 5h2.500L6 2v12l-3.500-3H0z" fill="#8a8d8e" stroke="none" />
            <path d="M7.500 5.500q1.600 2.500 0 5M9.800 3.500q3 4.500 0 9M12 1.500q4.600 6.500 0 13" opacity=".55" />
            <path d="M13.200.5q4.200 7 0 15" opacity=".45" />
          </svg>
          <svg width="32" height="32" viewBox="0 0 16 16" fill="currentColor">
            <path d="M3 0h5v2h2q1 0 1 1v4l-2 4v5H1q-1 0-1-1V3q0-1 1-1h2z" />
            <rect x="2" y="4" width="7" height="10" fill="#6f777b" />
            <path d="M11.800 4l4.200 6.500h-2l.6 5.500-4.200-7h2z" />
          </svg>
          <Caret />
        </TrayGroup>
      </Tray>
    </TopBar>
  );
}

function BrowserChrome() {
  return (
    <>
      <TitleBar>
        <WindowTitle>Add New Post ‹ Example Title — WordPress - Mozilla Firefox</WindowTitle>
        <WindowButtons>
          <RoundButton aria-label="Minimize"><Line size={28} width={1.200}><path d="M4 8.500h8" /></Line></RoundButton>
          <RoundButton aria-label="Maximize"><Line size={28} width={1.200}><path d="M4.500 4.500h7v7h-7z" /></Line></RoundButton>
          <RoundButton aria-label="Close" $strong><Line size={28} width={1.400}><path d="M4.500 4.500l7 7M11.500 4.500l-7 7" /></Line></RoundButton>
        </WindowButtons>
      </TitleBar>
      <TabStrip>
        <Tab $active>
          <TabTitle $fade>Add New Post ‹ Example Title</TabTitle>
          <TabClose aria-label="Close tab"><Line size={26} width={1.600}><path d="M3 3l10 10M13 3L3 13" /></Line></TabClose>
        </Tab>
        <Tab>
          <TabTitle>Example Title</TabTitle>
          <TabClose aria-label="Close tab"><Line size={26} width={1.600}><path d="M3 3l10 10M13 3L3 13" /></Line></TabClose>
        </Tab>
        <NewTab aria-label="New tab"><Line><path d="M8 1.500v13M1.500 8h13" strokeWidth="1.800" /></Line></NewTab>
      </TabStrip>
      <NavBar>
        <NavGroup $gap={28}>
          <NavButton aria-label="Back"><Line><path d="M15 8H1.500M7.500 2l-6 6 6 6" /></Line></NavButton>
          <NavButton aria-label="Forward" disabled><Line><path d="M1 8h13.500M8.500 2l6 6-6 6" /></Line></NavButton>
          <NavButton aria-label="Reload">
            <Line><path d="M12.500 12A6 6 0 1 1 13 5" /><path d="M14.500 2v5.500H9.500z" fill="currentColor" strokeWidth="1" /></Line>
          </NavButton>
          <NavButton aria-label="Home">
            <Line><path d="M1 8.500L8 1.500l7 7M3 8.500V15h10V8.500" /><path d="M6.500 15V9.500h3V15" strokeWidth="1.400" /></Line>
          </NavButton>
        </NavGroup>
        <UrlBar role="search">
          <Line size={30} width={1.200}><circle cx="8" cy="8" r="7" /><path d="M8 7.500V12M8 4.500v.2" strokeWidth="2" /></Line>
          <UrlInput aria-label="Address" readOnly value="wpdistillery.vm/wp-admin/post-new.php" />
          <NavButton type="button" aria-label="Reader view">
            <Line><rect x="2" y="1" width="12" height="14" rx="1.500" /><path d="M5 5h6M5 7h6M5 9h6M5 11h3" strokeWidth="1.100" /></Line>
          </NavButton>
          <UrlActions>
            <NavButton type="button" aria-label="Page actions">
              <svg width="32" height="32" viewBox="0 0 16 16" fill="currentColor"><circle cx="2" cy="8" r="2" /><circle cx="8" cy="8" r="2" /><circle cx="14" cy="8" r="2" /></svg>
            </NavButton>
            <NavButton type="button" aria-label="Save to Pocket">
              <svg width="32" height="32" viewBox="0 0 16 16"><path d="M1.500 1h13Q16 1 16 2.500V7a8 8 0 0 1-16 0V2.500Q0 1 1.500 1z" fill="currentColor" /><path d="M4.300 6L8 9.600 11.700 6" fill="none" stroke="#474749" strokeWidth="2.200" strokeLinecap="round" strokeLinejoin="round" /></svg>
            </NavButton>
            <NavButton type="button" aria-label="Bookmark">
              <Line width={1.800}><path d="M8 1.200l2 4.600 5 .5-3.800 3.300 1.200 5L8 12l-4.400 2.600 1.200-5L1 6.300l5-.5z" /></Line>
            </NavButton>
          </UrlActions>
        </UrlBar>
        <NavGroup $gap={28}>
          <NavButton aria-label="Downloads" $color="#45a1ff"><Line><path d="M8 1v10M3.500 7L8 11.500 12.500 7M3 15h10" /></Line></NavButton>
          <NavButton aria-label="Library"><Line width={1.600}><path d="M1.500 1.500v13M4.800 3v11.500M8 1.500v13M11 2l3.600 12.500" /></Line></NavButton>
          <NavButton aria-label="Sidebar">
            <Line><rect x="1" y="2" width="14" height="12" rx="2" /><path d="M7.800 2v12" strokeWidth="1.400" /><path d="M3.600 5h2M3.600 7h2M3.600 9h2" strokeWidth="1.100" /></Line>
          </NavButton>
          <NavButton aria-label="Menu"><Line size={28}><path d="M2 2.500h12M2 8h12M2 13.500h12" /></Line></NavButton>
        </NavGroup>
      </NavBar>
    </>
  );
}

function WordPressMenu() {
  return (
    <SideMenu aria-label="Main menu">
      <ul>
        {menu.map((item) => (
          <MenuItem key={item.label} $spaced={item.spaced}>
            <MenuLink href="#" $current={item.current}>
              <Glyph name={item.icon} />
              {item.label}
              {item.count && <Badge>{item.count}</Badge>}
            </MenuLink>
            {item.children && (
              <SubMenu>
                {item.children.map((c) => (
                  <li key={c}><SubLink href="#" $current={c === "Add New"}>{c}</SubLink></li>
                ))}
              </SubMenu>
            )}
          </MenuItem>
        ))}
      </ul>
      <CollapseButton><Glyph name="collapse" /><span>Collapse menu</span></CollapseButton>
    </SideMenu>
  );
}

function PostEditor() {
  return (
    <Column>
      <TitleInput aria-label="Title" placeholder="Enter title here" />
      <PermalinkRow>
        <span><strong>Permalink:</strong> http://wpdistillery.vm/?p=9</span>
        <Button $small>Change Permalinks</Button>
        <Button $small>View Post</Button>
      </PermalinkRow>
      <EditorTop>
        <MediaButton><Glyph name="media" size={38} />Add Media</MediaButton>
        <EditorTabs>
          <EditorTab $active>Visual</EditorTab>
          <EditorTab>Text</EditorTab>
        </EditorTabs>
      </EditorTop>
      <Editor>
        <Toolbar>
          {tools.map(([label, icon]) => (
            <ToolButton key={label} aria-label={label}>{icon}</ToolButton>
          ))}
          <ToolButton $push aria-label="Distraction-free writing"><Glyph name="fullscreen" /></ToolButton>
        </Toolbar>
        <Canvas>
          <Selection>
            <EmbedBox>
              <Glyph name="media" size={64} />
              <p>
                <code>{'[embed src="https://www.youtube.com/embed/du-TY1GUFGk\\x3csvg onload=alert("hax")\\x3e"]'}</code> failed to embed.
              </p>
            </EmbedBox>
          </Selection>
        </Canvas>
        <StatusBar>
          <span>Word count: 0</span>
          <span>Draft saved at 1:07:27 am.</span>
        </StatusBar>
      </Editor>
    </Column>
  );
}

function PostPanels() {
  const [format, setFormat] = useState("Standard");
  return (
    <SidePanels>
      <Panel>
        <PanelHead><h2>Publish</h2><Toggle aria-label="Toggle panel: Publish" /></PanelHead>
        <Split><Button>Save Draft</Button><Button>Preview</Button></Split>
        <Facts>
          {facts.map(([icon, label, value]) => (
            <Fact key={label}>
              <Glyph name={icon} />
              <span>{label} <b>{value}</b> <a href="#">Edit</a></span>
            </Fact>
          ))}
        </Facts>
        <Actions><a href="#">Move to Trash</a><PrimaryButton>Publish</PrimaryButton></Actions>
      </Panel>
      <Panel>
        <PanelHead><h2>Format</h2><Toggle aria-label="Toggle panel: Format" /></PanelHead>
        <FormatList>
          {formats.map(([label, icon]) => (
            <FormatRow key={label} $on={label === format}>
              <Radio type="radio" name="format" checked={label === format} onChange={() => setFormat(label)} />
              <Glyph name={icon} />
              {label}
            </FormatRow>
          ))}
        </FormatList>
      </Panel>
      <Panel>
        <PanelHead><h2>Categories</h2><Toggle aria-label="Toggle panel: Categories" /></PanelHead>
      </Panel>
    </SidePanels>
  );
}

export default function App() {
  return (
    <Desktop>
      <Global />
      <SystemBar />
      <Main>
        <Dock aria-label="Dock">
          {dock.map(([name, Icon, running]) => (
            <DockItem key={name} aria-label={name} $running={running}><Icon /></DockItem>
          ))}
        </Dock>
        <Window>
          <BrowserChrome />
          <Viewport>
            <Page>
              <AdminBar>
                <BarLink href="#" aria-label="About WordPress"><Glyph name="wordpress" /></BarLink>
                <BarLink href="#"><Glyph name="home" />Example Title</BarLink>
                <BarLink href="#"><Glyph name="update" />6</BarLink>
                <BarLink href="#" $dim><Glyph name="comments" />0</BarLink>
                <BarLink href="#"><Glyph name="plus" />New</BarLink>
                <BarLink href="#" $push $last>
                  Howdy, admin
                  <Avatar viewBox="0 0 32 32" aria-hidden="true">
                    <path d="M4 32q1-10 8-13-3-2-3-7 0-6 7-6t7 6q0 5-3 7 7 3 8 13z" fill="#fff" />
                  </Avatar>
                </BarLink>
              </AdminBar>
              <PageBody>
                <WordPressMenu />
                <Content>
                  <PostEditor />
                  <PostPanels />
                </Content>
              </PageBody>
            </Page>
            <ScrollBar>
              <ScrollButton aria-label="Scroll up"><Line size={20} width={2.400}><path d="M3 10.500l5-5 5 5" /></Line></ScrollButton>
              <Spacer $grow={115} />
              <Thumb $grow={642} />
              <Spacer $grow={544} />
              <ScrollButton aria-label="Scroll down"><Line size={20} width={2.400}><path d="M3 5.500l5 5 5-5" /></Line></ScrollButton>
            </ScrollBar>
          </Viewport>
        </Window>
      </Main>
    </Desktop>
  );
}
